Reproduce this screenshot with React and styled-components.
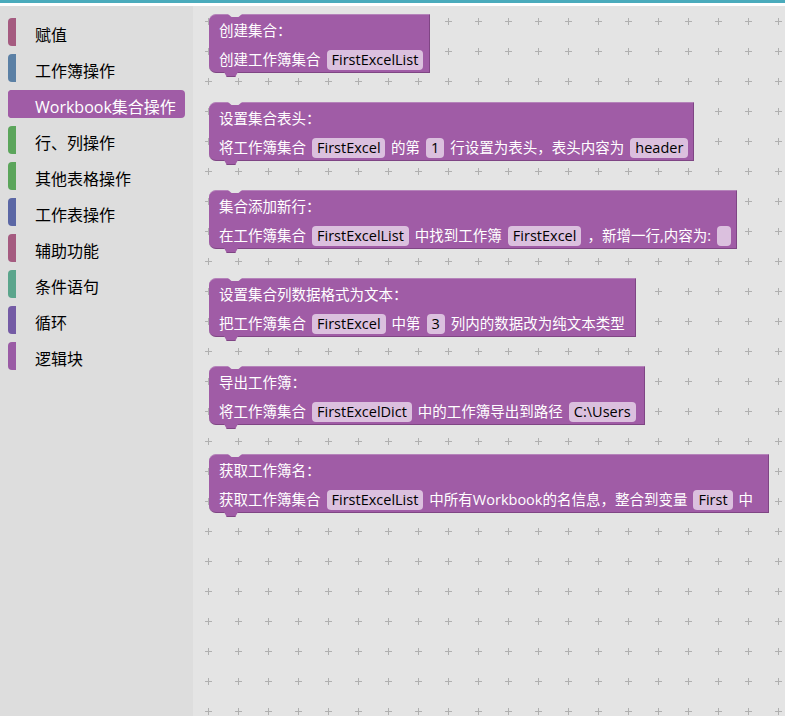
import React from 'react';
import styled, { createGlobalStyle } from 'styled-components';

const GlobalStyle = createGlobalStyle`
    html, body, #root {
        margin: 0;
        padding: 0;
        height: 100%;
    }
    body {
        font-family: "Open Sans", "Noto Sans CJK SC", sans-serif;
        overflow: hidden;
    }
`;

const Page = styled.div`
    display: flex;
    flex-direction: column;
    height: 100vh;
`;

const TopBar = styled.div`
    height: 3px;
    background: #4aabbc;
    border-bottom: 3px solid #ffffff;
    flex-shrink: 0;
`;

const Main = styled.div`
    display: flex;
    flex: 1;
    min-height: 0;
`;

const Toolbox = styled.div`
    width: 193px;
    flex-shrink: 0;
    box-sizing: border-box;
    background: #dddddd;
    padding: 12px 8px 0 8px;
    display: flex;
    flex-direction: column;
    gap: 8px;
`;

const Category = styled.div`
    position: relative;
    height: 28px;
    display: flex;
    align-items: center;
    padding-left: 27px;
    padding-top: 3px;
    box-sizing: border-box;
    border-radius: 4px;
    font-size: 16px;
    color: ${(p) => (p.$selected ? '#ffffff' : '#000000')};
    background: ${(p) => (p.$selected ? p.$color : 'transparent')};
    white-space: nowrap;

    &::before {
        content: '';
        position: absolute;
        left: 0;
        top: 0;
        bottom: 0;
        width: 8px;
        border-radius: 4px 0 0 4px;
        background: ${(p) => p.$color};
    }
`;

const Workspace = styled.div`
    position: relative;
    flex: 1;
    background: #e4e4e4;
    overflow: hidden;
`;

const GridLayer = styled.svg`
    position: absolute;
    inset: 0;
    width: 100%;
    height: 100%;
`;

const BlockList = styled.div`
    position: relative;
    padding: 8px 0 0 16px;
    display: flex;
    flex-direction: column;
    align-items: flex-start;
    gap: 29px;
`;

const Block = styled.div`
    position: relative;
    box-sizing: border-box;
    width: ${(p) => p.$width}px;
    height: 59px;
    padding: 7px 5px 4px 10px;
    background: #a05ca6;
    border-radius: 7px 0 0 7px;
    border-top: 1px solid #b583ba;
    border-right: 1px solid #7f4584;
    border-bottom: 1px solid #7f4584;
    color: #ffffff;
    font-size: 14.5px;
    display: flex;
    flex-direction: column;
    gap: 10px;

    &::before {
        content: '';
        position: absolute;
        top: -1px;
        left: 19px;
        width: 14px;
        height: 3px;
        background: #e4e4e4;
        clip-path: polygon(0 0, 100% 0, 75% 100%, 25% 100%);
    }

    &::after {
        content: '';
        position: absolute;
        bottom: -5px;
        left: 15px;
        width: 14px;
        height: 4px;
        background: #a05ca6;
        border-bottom: 1px solid #7f4584;
        clip-path: polygon(0 0, 100% 0, 80% 100%, 20% 100%);
    }
`;

const Title = styled.div`
    height: 18px;
    line-height: 18px;
    white-space: nowrap;
`;

const Row = styled.div`
    display: flex;
    align-items: center;
    gap: 6px;
    height: 20px;
    line-height: 20px;
    white-space: nowrap;
`;

const Field = styled.span`
    display: inline-block;
    height: 20px;
    line-height: 20px;
    min-width: 14px;
    box-sizing: border-box;
    padding: 0 5px;
    border-radius: 4px;
    background: #dbc0de;
    color: #000000;
`;

const categories = [
    { name: '赋值', color: '#a55b80' },
    { name: '工作簿操作', color: '#5b80a5' },
    { name: 'Workbook集合操作', color: '#a05ca6', selected: true },
    { name: '行、列操作', color: '#5ba55b' },
    { name: '其他表格操作', color: '#5ba55b' },
    { name: '工作表操作', color: '#5b67a5' },
    { name: '辅助功能', color: '#a55b80' },
    { name: '条件语句', color: '#5ba58c' },
    { name: '循环', color: '#745ba5' },
    { name: '逻辑块', color: '#9a5ba5' },
];

// each part: string = label, { f } = editable field
const blocks = [
    { title: '创建集合：', width: 221, parts: ['创建工作簿集合', { f: 'FirstExcelList' }] },
    {
        title: '设置集合表头：',
        width: 485,
        parts: ['将工作簿集合', { f: 'FirstExcel' }, '的第', { f: '1' }, '行设置为表头，表头内容为', { f: 'header' }],
    },
    {
        title: '集合添加新行：',
        width: 528,
        parts: ['在工作簿集合', { f: 'FirstExcelList' }, '中找到工作簿', { f: 'FirstExcel' }, '，新增一行,内容为:', { f: '' }],
    },
    {
        title: '设置集合列数据格式为文本：',
        width: 427,
        parts: ['把工作簿集合', { f: 'FirstExcel' }, '中第', { f: '3' }, '列内的数据改为纯文本类型'],
    },
    {
        title: '导出工作簿：',
        width: 436,
        parts: ['将工作簿集合', { f: 'FirstExcelDict' }, '中的工作簿导出到路径', { f: 'C:\\Users' }],
    },
    {
        title: '获取工作簿名：',
        width: 560,
        parts: ['获取工作簿集合', { f: 'FirstExcelList' }, '中所有Workbook的名信息，整合到变量', { f: 'First' }, '中'],
    },
];

const App = () => {
    return (
        <Page>
            <GlobalStyle />
            <TopBar />
            <Main>
                <Toolbox>
                    {categories.map((c) => (
                        <Category key={c.name} $color={c.color} $selected={c.selected}>
                            {c.name}
                        </Category>
                    ))}
                </Toolbox>
                <Workspace>
                    <GridLayer>
                        <defs>
                            <pattern id="grid" width="30" height="30" patternUnits="userSpaceOnUse">
                                <path d="M12 15.5h7M15.5 12v7" stroke="#b0b0b0" strokeWidth="1" />
                            </pattern>
                        </defs>
                        <rect width="100%" height="100%" fill="url(#grid)" />
                    </GridLayer>
                    <BlockList>
                        {blocks.map((b) => (
                            <Block key={b.title} $width={b.width}>
                                <Title>{b.title}</Title>
                                <Row>
                                    {b.parts.map((p, i) =>
                                        typeof p === 'string' ? <span key={i}>{p}</span> : <Field key={i}>{p.f}</Field>
                                    )}
                                </Row>
                            </Block>
                        ))}
                    </BlockList>
                </Workspace>
            </Main>
        </Page>
    );
};

export default App;
